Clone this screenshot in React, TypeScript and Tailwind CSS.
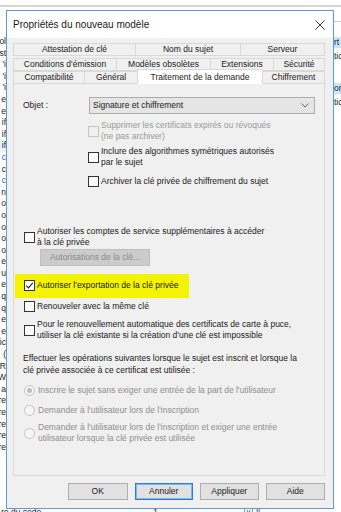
import React from "react";

const font = "font-['Liberation_Sans',Arial,sans-serif]";

function Check({ checked = false, disabled = false }: { checked?: boolean; disabled?: boolean }) {
  return (
    <span
      className={`mt-[0px] flex h-[11px] w-[11px] shrink-0 items-center justify-center border ${
        disabled ? "border-[#c4c4c4] bg-[#f0f0f0]" : "border-[#333333] bg-white"
      }`}
    >
      {checked && (
        <svg width="9" height="9" viewBox="0 0 9 9">
          <path d="M1.2 4.6 L3.5 6.9 L7.8 1.8" fill="none" stroke="#222" strokeWidth="1.1" />
        </svg>
      )}
    </span>
  );
}

function Radio({ on = false }: { on?: boolean }) {
  return (
    <span className="flex h-[11px] w-[11px] shrink-0 items-center justify-center rounded-full border border-[#c4c4c4] bg-[#f6f6f6]">
      {on && <span className="h-[5px] w-[5px] rounded-full bg-[#bdbdbd]" />}
    </span>
  );
}

function CheckRow({
  lines,
  checked,
  disabled,
}: {
  lines: string[];
  checked?: boolean;
  disabled?: boolean;
}) {
  return (
    <div className="flex items-center gap-[2px]">
      <Check checked={checked} disabled={disabled} />
      <div className={`leading-[11px] ${disabled ? "text-[#9a9a9a]" : "text-[#1a1a1a]"}`}>
        {lines.map((l) => (
          <div key={l} className="whitespace-nowrap">
            {l}
          </div>
        ))}
      </div>
    </div>
  );
}

function RadioRow({ lines, on }: { lines: string[]; on?: boolean }) {
  return (
    <div className="flex items-center gap-[3px] pl-[1px]">
      <Radio on={on} />
      <div className="leading-[11px] text-[#8f8f8f]">
        {lines.map((l) => (
          <div key={l} className="whitespace-nowrap">
            {l}
          </div>
        ))}
      </div>
    </div>
  );
}

function Tab({ label, w, selected = false }: { label: string; w: number; selected?: boolean }) {
  return (
    <div
      style={{ width: w }}
      className={`flex shrink-0 items-center justify-center whitespace-nowrap border border-[#d9d9d9] -ml-[1px] first:ml-0 ${
        selected ? "relative z-10 -mt-[2px] h-[15px] border-b-0 bg-white" : "h-[13px] bg-[#f0f0f0]"
      }`}
    >
      {label}
    </div>
  );
}

function Btn({ label, w, primary = false }: { label: string; w: number; primary?: boolean }) {
  return (
    <div
      style={{ width: w }}
      className={`flex h-[17px] items-center justify-center bg-[#e1e1e1] text-[#1a1a1a] ${
        primary ? "border border-[#2a7fd4] shadow-[inset_0_0_0_1px_#7fb5ea]" : "border border-[#adadad]"
      }`}
    >
      {label}
    </div>
  );
}

const leftFrags = [
  "ol", "st", "'i", "'i", "'i", "e", "e", "if", "if", "if", "c", "c", "c", "n", "o", "o", "o",
  "o", "o", "e", "u", "e", "q", "q", "e", "e", "ic", "(", "R", "W", "a", "re", "re", "re", "re", "re",
];

export default function App() {
  return (
    <div className={`relative h-[512px] w-[341px] overflow-hidden bg-white text-[8.5px] text-[#1a1a1a] ${font}`}>
      {/* background window pieces */}
      <div className="absolute left-0 top-[5px] h-[2px] w-full bg-[#d6d6d6]" />
      <div className="absolute left-0 top-[36px] flex w-[6px] flex-col overflow-hidden text-[8.5px] leading-[11.6px]">
        {leftFrags.map((f, i) => (
          <div
            key={i}
            className={`flex justify-end whitespace-nowrap ${i === 9 ? "bg-[#e5f1fb]" : ""} ${
              i === 10 || i === 12 ? "text-[#1e66c8]" : ""
            }`}
          >
            {f}
          </div>
        ))}
      </div>
      <div className="absolute left-[333px] top-[21px] flex w-[8px] flex-col overflow-hidden text-[8.5px] leading-[11px]">
        <div className="h-[1px] bg-[#cfcfcf]" />
        <div className="mt-[15px] bg-[#cfe3f6] pl-[1px]">rt</div>
        <div className="mt-[3px] pl-[1px]">tic</div>
        <div className="mt-[21px] bg-[#cfe3f6] pl-[1px]">on</div>
        <div className="mt-[3px] pl-[1px]">tic</div>
      </div>
      <div className="absolute left-0 top-[507px] flex w-full whitespace-nowrap text-[8.5px] leading-[11px]">
        <span className="pl-[1px]">re du code</span>
        <span className="ml-[112px]">1</span>
        <span className="ml-[86px] flex h-[8px] w-[9px] items-start justify-center border border-[#999] text-[7px] leading-[7px]">v</span>
        <span className="ml-[3px]">||</span>
      </div>

      {/* dialog window */}
      <div className="absolute left-[6px] top-[10px] flex h-[499px] w-[328px] flex-col border border-[#5e9bd6] bg-[#f0f0f0]">
        <div className="flex h-[27px] shrink-0 items-center justify-between bg-white pl-[6px] pr-[8px]">
          <span className="text-[10px] text-[#1a1a1a]">Propriétés du nouveau modèle</span>
          <svg width="10" height="10" viewBox="0 0 10 10">
            <path d="M0.5 0.5 L9.5 9.5 M9.5 0.5 L0.5 9.5" stroke="#222" strokeWidth="0.9" />
          </svg>
        </div>

        <div className="flex flex-1 flex-col pl-[6px] pr-[8px] pt-[5px]">
          {/* tabs */}
          <div className="flex flex-col">
            <div className="flex h-[14px]">
              <Tab label="Attestation de clé" w={123} />
              <Tab label="Nom du sujet" w={106} />
              <Tab label="Serveur" w={85} />
            </div>
            <div className="-mt-[1px] flex h-[15px] items-end">
              <Tab label="Conditions d'émission" w={104} />
              <Tab label="Modèles obsolètes" w={95} />
              <Tab label="Extensions" w={64} />
              <Tab label="Sécurité" w={52} />
            </div>
            <div className="flex h-[13px] items-end">
              <Tab label="Compatibilité" w={72} />
              <Tab label="Général" w={54} />
              <Tab label="Traitement de la demande" w={126} selected />
              <Tab label="Chiffrement" w={63} />
            </div>
          </div>

          {/* panel */}
          <div className="-mt-[1px] flex h-[393px] w-[312px] flex-col border border-[#d9d9d9] bg-[#f0f0f0] pl-[9px] pr-[9px]">
            <div className="mt-[13px] flex items-center">
              <span className="w-[66px]">Objet :</span>
              <div className="flex h-[17px] flex-1 items-center justify-between border border-[#adadad] bg-[#e5e5e5] pl-[3px] pr-[5px]">
                <span>Signature et chiffrement</span>
                <svg width="8" height="5" viewBox="0 0 8 5">
                  <path d="M0.5 0.5 L4 4 L7.5 0.5" fill="none" stroke="#555" strokeWidth="0.9" />
                </svg>
              </div>
            </div>

            <div className="ml-[65px] flex flex-col">
              <div className="mt-[6px]">
                <CheckRow
                  disabled
                  lines={["Supprimer les certificats expirés ou révoqués", "(ne pas archiver)"]}
                />
              </div>
              <div className="mt-[4px]">
                <CheckRow lines={["Inclure des algorithmes symétriques autorisés", "par le sujet"]} />
              </div>
              <div className="mt-[8px]">
                <CheckRow lines={["Archiver la clé privée de chiffrement du sujet"]} />
              </div>
            </div>

            <div className="mt-[39px] pl-[1px]">
              <CheckRow
                lines={["Autoriser les comptes de service supplémentaires à accéder", "à la clé privée"]}
              />
            </div>
            <div className="ml-[17px] mt-[1px] flex h-[17px] w-[110px] items-center justify-center border border-[#bfbfbf] bg-[#cccccc] text-[#8a8a8a]">
              Autorisations de la clé...
            </div>

            <div className="-ml-[8px] mt-[8px] w-[174px] bg-[#f4f400] pb-[7px] pl-[9px] pt-[6px]">
              <CheckRow checked lines={["Autoriser l'exportation de la clé privée"]} />
            </div>

            <div className="mt-[3px] pl-[1px]">
              <CheckRow lines={["Renouveler avec la même clé"]} />
            </div>
            <div className="mt-[7px] pl-[1px]">
              <CheckRow
                lines={[
                  "Pour le renouvellement automatique des certificats de carte à puce,",
                  "utiliser la clé existante si la création d'une clé est impossible",
                ]}
              />
            </div>

            <div className="mt-[11px] leading-[12px]">
              <div className="whitespace-nowrap">
                Effectuer les opérations suivantes lorsque le sujet est inscrit et lorsque la
              </div>
              <div className="whitespace-nowrap">clé privée associée à ce certificat est utilisée :</div>
            </div>

            <div className="mt-[9px]">
              <RadioRow on lines={["Inscrire le sujet sans exiger une entrée de la part de l'utilisateur"]} />
            </div>
            <div className="mt-[9px]">
              <RadioRow lines={["Demander à l'utilisateur lors de l'inscription"]} />
            </div>
            <div className="mt-[6px]">
              <RadioRow
                lines={[
                  "Demander à l'utilisateur lors de l'inscription et exiger une entrée",
                  "utilisateur lorsque la clé privée est utilisée",
                ]}
              />
            </div>
          </div>

          {/* buttons */}
          <div className="mt-[7px] flex gap-[7px] pl-[55px]">
            <Btn label="OK" w={60} />
            <Btn label="Annuler" w={59} primary />
            <Btn label="Appliquer" w={59} />
            <Btn label="Aide" w={60} />
          </div>
        </div>
      </div>
    </div>
  );
}
